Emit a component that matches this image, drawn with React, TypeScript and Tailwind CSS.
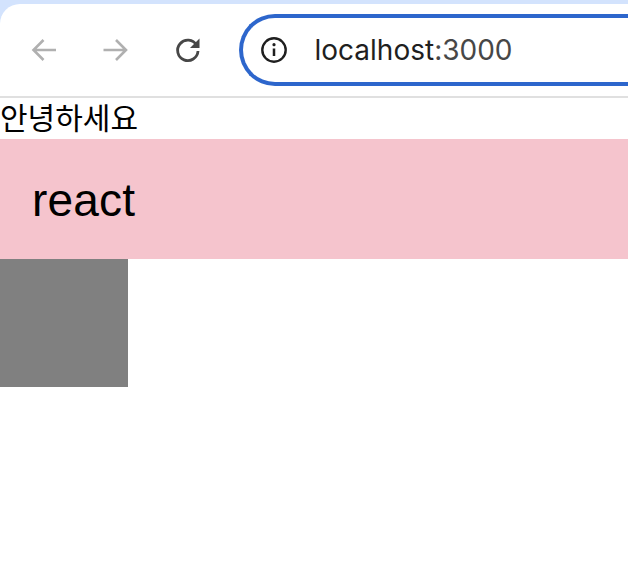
export default function App() {
  return (
    <div className="w-[628px] h-[572px] overflow-hidden bg-white font-['Inter',sans-serif]">
      <div className="h-[98px] bg-[#d3e3fd] pt-[4px]">
        <div className="h-[94px] bg-white rounded-tl-[20px] border-b-2 border-[#e0e0e0] flex items-center overflow-hidden">
          <div className="w-[239px] shrink-0 flex items-center h-[72px]">
            <svg className="ml-[29px] shrink-0" width="28" height="28" viewBox="0 0 28 28" fill="none" stroke="#b0b0b0" strokeWidth="2.6">
              <path d="M27 14H5M14.5 4 4.5 14 14.5 24" />
            </svg>
            <svg className="ml-[45px] shrink-0" width="28" height="28" viewBox="0 0 28 28" fill="none" stroke="#b0b0b0" strokeWidth="2.6">
              <path d="M1.5 14H24M14 4 24 14 14 24" />
            </svg>
            <svg className="ml-[44px] shrink-0" width="28" height="28" viewBox="0 0 28 28" fill="none">
              <path d="M22.6 9.2A10.2 10.2 0 1 0 24 15" stroke="#474747" strokeWidth="2.8" />
              <path d="M25.5 2.5V12H16Z" fill="#474747" />
            </svg>
          </div>
          <div className="w-[500px] shrink-0 h-[72px] -ml-[0.5px] border-4 border-r-0 border-[#2d66cc] rounded-l-[36px] flex items-center pl-[17px]">
            <svg className="shrink-0" width="28" height="28" viewBox="0 0 28 28" fill="none">
              <circle cx="14" cy="14" r="11.7" stroke="#1f1f1f" strokeWidth="2.4" />
              <path d="M14 12.5V20" stroke="#1f1f1f" strokeWidth="2.5" />
              <circle cx="14" cy="8.7" r="1.6" fill="#1f1f1f" />
            </svg>
            <span className="ml-[27px] text-[28px] leading-none text-[#1f1f1f]">
              localhost<span className="text-[#474747]">:3000</span>
            </span>
          </div>
        </div>
      </div>
      <div className="h-[41px] text-[30px] leading-[37px] text-black font-['Noto_Sans_CJK_KR',sans-serif]">안녕하세요</div>
      <div className="h-[120px] bg-[#f5c4cd] pl-[32px] pt-[3px] flex items-center text-[46px] tracking-[0.2px] text-black font-['Liberation_Sans',sans-serif]">react</div>
      <div className="w-[128px] h-[128px] bg-[#808080]" />
    </div>
  );
}
